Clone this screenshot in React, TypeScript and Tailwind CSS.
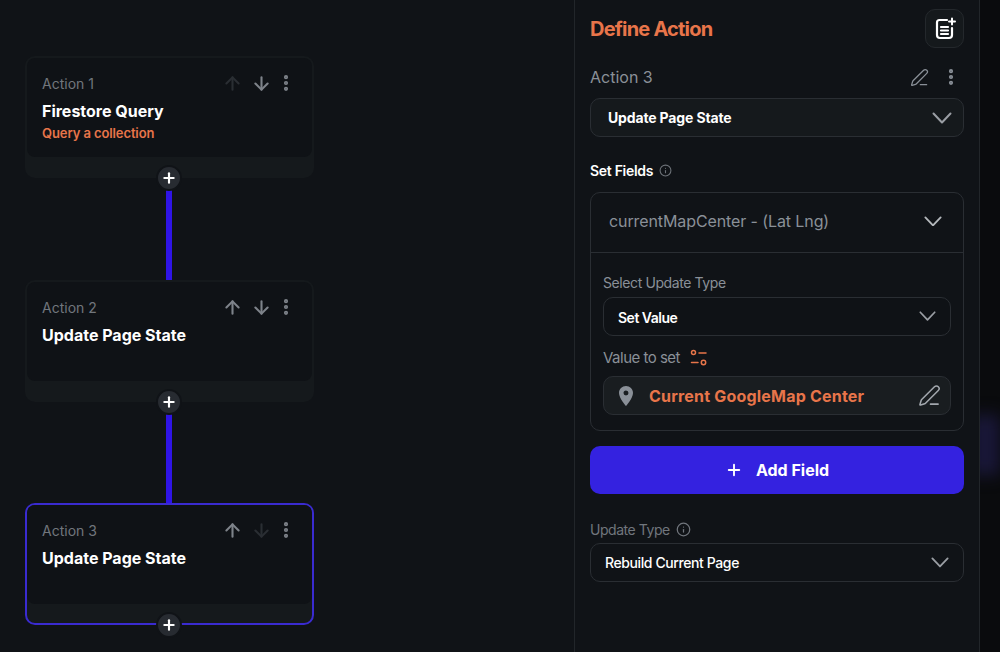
import { FC, ReactNode } from "react";
import { ArrowDown, ArrowUp, EllipsisVertical, Info, PenLine, Plus } from "lucide-react";
import { MdLocationOn } from "react-icons/md";

const FONT = "font-['Inter','Noto_Sans',sans-serif]";

const DocPlus: FC = () => (
  <svg width="24" height="24" viewBox="0 0 24 24" fill="none" stroke="white" strokeWidth="2.200" strokeLinecap="round">
    <path d="M14 3H6.500A2.500 2.500 0 0 0 4 5.500V18a3 3 0 0 0 3 3h9a3 3 0 0 0 3-3v-7" />
    <path d="M8 10h7M8 13.500h7M8 17h7" />
    <path d="M19 1.500v6M16 4.500h6" strokeWidth="2" />
  </svg>
);

const SlidersIcon: FC = () => (
  <svg width="18" height="18" viewBox="0 0 18 18" fill="none" stroke="#e8754a" strokeWidth="1.500" strokeLinecap="round">
    <circle cx="3.500" cy="3.500" r="2" />
    <path d="M9 4h7M1.500 13.500h6.500" />
    <circle cx="13.500" cy="13.500" r="2.200" />
  </svg>
);

const Chevron: FC<{ width: number; color?: string }> = ({ width, color = "#9a9ea4" }) => (
  <svg width={width} height={width * 0.6} viewBox="0 0 20 12" fill="none" stroke={color} strokeWidth="2" strokeLinecap="round" strokeLinejoin="round">
    <path d="M1.500 1.500 10 10.500l8.500-9" />
  </svg>
);

type NodeProps = {
  label: string;
  title: string;
  subtitle?: string;
  upOff?: boolean;
  downOff?: boolean;
  selected?: boolean;
};

const ActionNode: FC<NodeProps> = ({ label, title, subtitle, upOff, downOff, selected }) => (
  <div
    className={`relative w-[289px] h-[122px] rounded-[10px] bg-[#15191c] ${
      selected ? "border-2 border-[#3a2bd0]" : "p-[2px]"
    }`}
  >
    <div className="h-[99px] rounded-[8px] bg-[#0f1216] pl-[15px] pr-[16px] pt-[13px]">
      <div className="flex items-center justify-between h-[24px]">
        <span className="text-[14px] text-[#71767d]">{label}</span>
        <div className="flex items-center">
          <ArrowUp size={21} strokeWidth={2.400} className={upOff ? "text-[#2a2e33]" : "text-[#7e838a]"} />
          <ArrowDown size={21} strokeWidth={2.400} className={`ml-[8px] ${downOff ? "text-[#2a2e33]" : "text-[#7e838a]"}`} />
          <EllipsisVertical size={20} strokeWidth={3} className="ml-[4px] text-[#7e838a]" />
        </div>
      </div>
      <div className="mt-[4px] text-[16px] leading-[24px] font-bold text-white">{title}</div>
      {subtitle && <div className="text-[13px] leading-[20px] font-semibold tracking-[-0.1px] text-[#e8754a]">{subtitle}</div>}
    </div>
    <div
      className={`absolute left-[calc(50%-1px)] -translate-x-1/2 w-[26px] h-[26px] rounded-full bg-[#272b31] border-2 border-[#101317] flex items-center justify-center ${
        selected ? "-bottom-[15px]" : "-bottom-[13px]"
      }`}
    >
      <Plus size={16} strokeWidth={3.200} className="text-white" />
    </div>
  </div>
);

const Connector: FC<{ className: string }> = ({ className }) => (
  <div className={`ml-[141px] w-[6px] bg-[#2f14e6] ${className}`} />
);

const SelectBox: FC<{ children: ReactNode; className: string; chevron: number }> = ({
  children,
  className,
  chevron,
}) => (
  <div className={`flex items-center justify-between h-[39px] rounded-[10px] border border-[#2a2e33] ${className}`}>
    {children}
    <Chevron width={chevron} />
  </div>
);

export default function App() {
  return (
    <div className={`flex w-[1000px] h-[652px] overflow-hidden bg-[#101317] ${FONT}`}>
      <div className="w-[574px] shrink-0 pl-[25px] pt-[56px]">
        <ActionNode label="Action 1" title="Firestore Query" subtitle="Query a collection" upOff />
        <Connector className="h-[102px]" />
        <ActionNode label="Action 2" title="Update Page State" />
        <Connector className="h-[101px]" />
        <ActionNode label="Action 3" title="Update Page State" downOff selected />
      </div>

      <div className="w-[406px] shrink-0 border-x border-[#22262a] px-[15px] pt-[9px]">
        <div className="flex items-center justify-between h-[39px]">
          <h1 className="text-[20px] font-bold text-[#e8754a] tracking-[-0.8px]">Define Action</h1>
          <div className="w-[39px] h-[39px] rounded-[10px] border border-[#24282c] bg-[#15191c] flex items-center justify-center">
            <DocPlus />
          </div>
        </div>

        <div className="flex items-center justify-between mt-[16px] h-[26px]">
          <span className="text-[16px] text-[#8a9098]">Action 3</span>
          <div className="flex items-center gap-[12px] mr-[3px]">
            <PenLine size={19} strokeWidth={1.600} className="text-[#8a9098]" />
            <EllipsisVertical size={20} strokeWidth={3} className="text-[#8a9098]" />
          </div>
        </div>

        <SelectBox className="mt-[8px] pl-[17px] pr-[11px] bg-[#15191c]" chevron={20}>
          <span className="text-[14px] font-bold tracking-[-0.15px] text-white">Update Page State</span>
        </SelectBox>

        <div className="flex items-center gap-[6px] mt-[23px] h-[20px]">
          <span className="text-[14px] font-semibold tracking-[-0.3px] text-white">Set Fields</span>
          <Info size={13} className="text-[#6d7278]" />
        </div>

        <div className="mt-[12px] h-[239px] rounded-[10px] border border-[#2a2e33]">
          <div className="flex items-center justify-between h-[60px] pl-[18px] pr-[21px] pb-[3px] border-b border-[#2a2e33]">
            <span className="text-[16px] tracking-[-0.1px] text-[#8a9098]">currentMapCenter - (Lat Lng)</span>
            <Chevron width={18} color="#b4b8bc" />
          </div>
          <div className="px-[12px] pt-[20px]">
            <div className="text-[14px] leading-[20px] tracking-[-0.4px] text-[#8a9098]">Select Update Type</div>
            <SelectBox className="mt-[4px] pl-[14px] pr-[14px] bg-[#0f1216]" chevron={17}>
              <span className="pt-[1px] text-[14px] font-semibold tracking-[-0.5px] text-white">Set Value</span>
            </SelectBox>
            <div className="flex items-center gap-[10px] mt-[11px] h-[22px]">
              <span className="text-[15px] tracking-[-0.5px] text-[#8a9098]">Value to set</span>
              <SlidersIcon />
            </div>
            <div className="flex items-center h-[39px] mt-[7px] rounded-[10px] border border-[#2a2e33] bg-[#191d20] pl-[10px] pr-[9px]">
              <MdLocationOn size={24} className="text-[#8a9098]" />
              <span className="ml-[11px] flex-1 pt-[1px] text-[16px] font-bold tracking-[0.2px] text-[#e8754a]">
                Current GoogleMap Center
              </span>
              <PenLine size={23} strokeWidth={1.600} className="text-[#a2a7ad]" />
            </div>
          </div>
        </div>

        <button className="mt-[15px] w-full h-[48px] rounded-[10px] bg-[#3422e0] flex items-center justify-center gap-[13px] text-white">
          <Plus size={18} strokeWidth={2.500} />
          <span className="text-[16px] font-bold">Add Field</span>
        </button>

        <div className="flex items-center gap-[6px] mt-[25px] h-[20px]">
          <span className="text-[14px] tracking-[-0.45px] text-[#71767d]">Update Type</span>
          <Info size={15} className="text-[#71767d]" />
        </div>

        <SelectBox className="mt-[4px] pl-[14px] pr-[14px] bg-[#101317]" chevron={18}>
          <span className="text-[14px] font-medium tracking-[-0.4px] text-white">Rebuild Current Page</span>
        </SelectBox>
      </div>

      <div className="flex-1 overflow-hidden bg-[#0a0b0d] pt-[415px]">
        <div className="-ml-[10px] h-[60px] bg-[#191738] blur-[8px]" />
      </div>
    </div>
  );
}
